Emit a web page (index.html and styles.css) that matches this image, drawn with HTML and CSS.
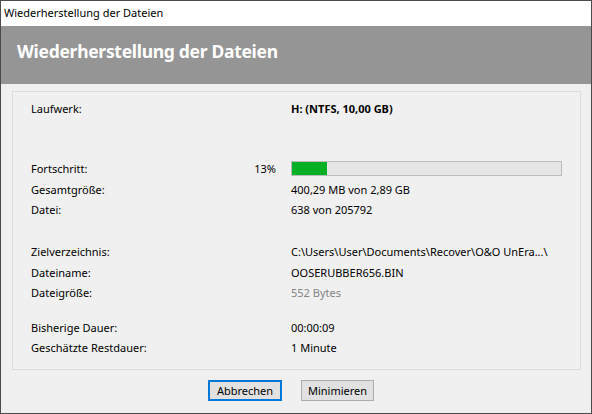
FILE: index.html
```html
<!DOCTYPE html>
<html lang="de">
<head>
<meta charset="utf-8">
<title>Wiederherstellung der Dateien</title>
<link rel="stylesheet" href="styles.css">
</head>
<body>
<div class="window">
  <div class="titlebar">Wiederherstellung der Dateien</div>
  <div class="banner"><h1 class="banner-title">Wiederherstellung der Dateien</h1></div>
  <div class="content">
    <div class="group">
      <div class="section section-drive">
        <div class="row"><span class="label">Laufwerk:</span><span class="value strong">H: (NTFS, 10,00 GB)</span></div>
      </div>
      <div class="section section-progress">
        <div class="row row-tall">
          <span class="label">Fortschritt:</span>
          <span class="pct">13%</span>
          <div class="value"><div class="progress"><div class="progress-fill" style="width: 13%"></div></div></div>
        </div>
        <div class="row"><span class="label">Gesamtgröße:</span><span class="value">400,29 MB von 2,89 GB</span></div>
        <div class="row"><span class="label">Datei:</span><span class="value">638 von 205792</span></div>
      </div>
      <div class="section section-target">
        <div class="row row-tall"><span class="label">Zielverzeichnis:</span><span class="value">C:\Users\User\Documents\Recover\O&amp;O UnEra...\</span></div>
        <div class="row"><span class="label">Dateiname:</span><span class="value">OOSERUBBER656.BIN</span></div>
        <div class="row"><span class="label">Dateigröße:</span><span class="value muted">552 Bytes</span></div>
      </div>
      <div class="section section-time">
        <div class="row"><span class="label">Bisherige Dauer:</span><span class="value">00:00:09</span></div>
        <div class="row"><span class="label">Geschätzte Restdauer:</span><span class="value">1 Minute</span></div>
      </div>
    </div>
    <div class="buttons">
      <button class="btn btn-default">Abbrechen</button>
      <button class="btn">Minimieren</button>
    </div>
  </div>
</div>
</body>
</html>
```

FILE: styles.css
```css
* {
  box-sizing: border-box;
}

html, body {
  margin: 0;
  padding: 0;
  background: #f0f0f0;
}

body {
  font-family: "Noto Sans", "Open Sans", sans-serif;
  font-size: 11px;
  color: #000;
}

.window {
  width: 592px;
  height: 414px;
  border: 1px solid #4b4b4b;
  background: #f0f0f0;
  display: flex;
  flex-direction: column;
}

/* caption bar */
.titlebar {
  height: 25px;
  background: #fff;
  padding-left: 3px;
  line-height: 24px;
  font-size: 11px;
}

/* grey header strip */
.banner {
  height: 58px;
  background: #959595;
  padding: 12px 0 0 16px;
}

.banner-title {
  margin: 0;
  font-size: 17.5px;
  letter-spacing: -0.3px;
  line-height: 26px;
  font-weight: 700;
  color: #fff;
}

.content {
  flex: 1;
  display: flex;
  flex-direction: column;
}

/* framed details panel */
.group {
  margin: 7px 10px 0 11px;
  border: 1px solid #dcdcdc;
  height: 279px;
  padding: 7px 0 0 18px;
}

.row {
  display: grid;
  grid-template-columns: 215px 30px 1fr;
  height: 20px;
  line-height: 20px;
  white-space: nowrap;
}

.row-tall {
  height: 21px;
}

.label {
  grid-column: 1;
}

.pct {
  grid-column: 2;
  text-align: right;
}

.value {
  grid-column: 3;
  padding-left: 15px;
}

.strong {
  font-weight: 700;
}

.muted {
  color: #858585;
}

.section-progress {
  margin-top: 40px;
}

.section-target {
  margin-top: 22px;
}

.section-time {
  margin-top: 15px;
}

.progress {
  margin-top: 2px;
  width: 271px;
  height: 15px;
  border: 1px solid #bcbcbc;
  background: #e6e6e6;
}

.progress-fill {
  height: 100%;
  background: #06b025;
}

/* dialog buttons */
.buttons {
  display: flex;
  gap: 19px;
  padding-left: 207px;
  margin-top: 10px;
}

.btn {
  font-family: inherit;
  font-size: 11px;
  color: #000;
  height: 21px;
  padding: 0;
  background: #e1e1e1;
  border: 1px solid #adadad;
  border-radius: 0;
  line-height: 18px;
}

.btn-default {
  width: 74px;
  border: 2px solid #0078d7;
}

.btn:not(.btn-default) {
  width: 73px;
}
```
